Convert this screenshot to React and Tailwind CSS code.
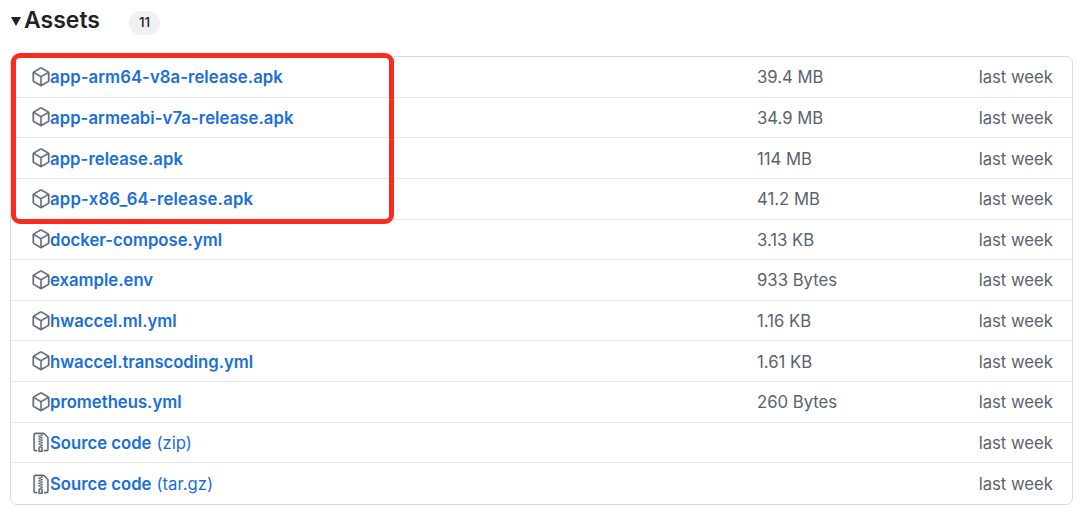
import React from "react";
import { GoPackage, GoFileZip } from "react-icons/go";

const rows = [
  ["app-arm64-v8a-release.apk", "39.4 MB", "", "tracking-[0.08px]"],
  ["app-armeabi-v7a-release.apk", "34.9 MB", "", "tracking-[0.07px]"],
  ["app-release.apk", "114 MB", "", "tracking-[0.06px]"],
  ["app-x86_64-release.apk", "41.2 MB", "", "tracking-[0.22px]"],
  ["docker-compose.yml", "3.13 KB", "", ""],
  ["example.env", "933 Bytes", "", ""],
  ["hwaccel.ml.yml", "1.16 KB", "", ""],
  ["hwaccel.transcoding.yml", "1.61 KB", "", "tracking-[-0.04px]"],
  ["prometheus.yml", "260 Bytes", "", ""],
  ["Source code", "", "(zip)", ""],
  ["Source code", "", "(tar.gz)", ""],
];

export default function App() {
  return (
    <div className="relative w-[1080px] h-[515px] overflow-hidden bg-white font-['Inter','Liberation_Sans',sans-serif] text-[16.7px] antialiased">
      <div className="flex items-center h-[56px] pl-[11px] pb-[17px]">
        <span className="w-0 h-0 border-x-[5px] border-x-transparent border-t-[9px] border-t-[#1f2328] mt-[3px]" />
        <span className="ml-[4px] text-[23px] leading-[30px] font-semibold text-[#1f2328] -translate-x-[1px]">Assets</span>
        <span className="ml-[28px] mt-[6px] flex items-center justify-center w-[31px] h-[24px] rounded-full bg-[#eff1f3] text-[13.5px] font-medium text-[#1f2328]">11</span>
      </div>
      <div className="ml-[10px] w-[1063px] h-[449px] rounded-[7px] border border-[#d5dbe2] flex flex-col">
        {rows.map(([name, size, suffix, track], i) => (
          <div
            key={i}
            className={`flex items-center h-[40.64px] pl-[20px] ${i < rows.length - 1 ? "border-b border-[#e3e7ec]" : ""}`}
          >
            {suffix ? (
              <GoFileZip className="text-[#5f6874] shrink-0 -mr-[1px] stroke-[#5f6874] stroke-[0.5]" size={20} />
            ) : (
              <GoPackage className="text-[#5f6874] shrink-0 -mr-[1px] stroke-[#5f6874] stroke-[0.5]" size={20} />
            )}
            <span className={`pt-[2px] text-[#1a6fd8] font-semibold whitespace-nowrap ${track}`}>{name}</span>
            {suffix && <span className="pt-[2px] ml-[5px] text-[#1a6fd8] font-normal whitespace-nowrap">{suffix}</span>}
            <span className="pt-[2px] ml-auto w-[221px] text-[#59636e] whitespace-nowrap">{size}</span>
            <span className="pt-[2px] w-[94px] pr-[19px] text-right text-[#59636e] whitespace-nowrap">last week</span>
          </div>
        ))}
      </div>
      <div className="absolute left-[11px] top-[53px] w-[383px] h-[171px] rounded-[9px] border-[5px] border-[#fb2a1f]" />
    </div>
  );
}
